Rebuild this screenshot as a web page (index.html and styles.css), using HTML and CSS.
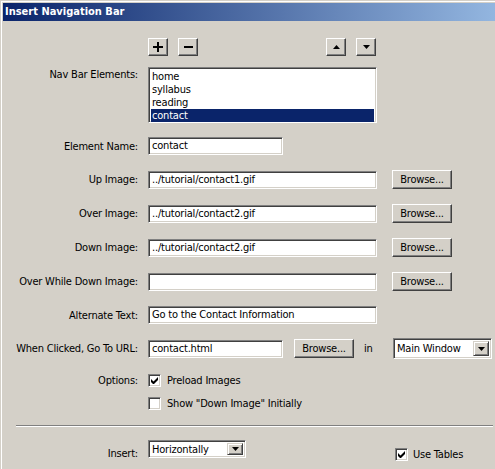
FILE: index.html
```html
<!DOCTYPE html>
<html>
<head>
<meta charset="utf-8">
<link rel="stylesheet" href="styles.css">
</head>
<body>
<div class="window">
  <div class="titlebar">Insert Navigation Bar</div>
  <div class="content">
    <div class="row toolbar">
      <span class="label"></span>
      <span class="btn sq"><svg width="10" height="10" viewBox="0 0 10 10"><path d="M4 0h2v4h4v2H6v4H4V6H0V4h4z" fill="#000"/></svg></span>
      <span class="btn sq gap10"><svg width="9" height="2" viewBox="0 0 9 2"><rect width="9" height="2" fill="#000"/></svg></span>
      <span class="btn sq gap128"><svg width="7" height="4" viewBox="0 0 7 4"><polygon points="3.5,0 7,4 0,4" fill="#000"/></svg></span>
      <span class="btn sq gap10"><svg width="7" height="4" viewBox="0 0 7 4"><polygon points="0,0 7,0 3.5,4" fill="#000"/></svg></span>
    </div>
    <div class="row listrow">
      <span class="label top">Nav Bar Elements:</span>
      <div class="list">
        <div class="item">home</div>
        <div class="item">syllabus</div>
        <div class="item">reading</div>
        <div class="item sel">contact</div>
      </div>
    </div>
    <div class="row r14">
      <span class="label">Element Name:</span>
      <span class="field short">contact</span>
    </div>
    <div class="row r15 h19">
      <span class="label">Up Image:</span>
      <span class="field long">../tutorial/contact1.gif</span>
      <span class="btn browse gap15">Browse...</span>
    </div>
    <div class="row r15 h19">
      <span class="label">Over Image:</span>
      <span class="field long">../tutorial/contact2.gif</span>
      <span class="btn browse gap15">Browse...</span>
    </div>
    <div class="row r15 h19">
      <span class="label">Down Image:</span>
      <span class="field long">../tutorial/contact2.gif</span>
      <span class="btn browse gap15">Browse...</span>
    </div>
    <div class="row r15 h19">
      <span class="label">Over While Down Image:</span>
      <span class="field long"></span>
      <span class="btn browse gap15">Browse...</span>
    </div>
    <div class="row r15">
      <span class="label">Alternate Text:</span>
      <span class="field long">Go to the Contact Information</span>
    </div>
    <div class="row r14 h21">
      <span class="label">When Clicked, Go To URL:</span>
      <span class="field short">contact.html</span>
      <span class="btn browse gap11">Browse...</span>
      <span class="in">in</span>
      <span class="select main"><span class="seltext">Main Window</span><span class="drop"><svg width="7" height="4" viewBox="0 0 7 4"><polygon points="0,0 7,0 3.5,4" fill="#000"/></svg></span></span>
    </div>
    <div class="row r15 h13">
      <span class="label">Options:</span>
      <span class="check"><svg width="7" height="7" viewBox="0 0 7 7"><path d="M0 2v3l2 2h1l4-4V0L2.5 4.5z" fill="#000"/></svg></span>
      <span class="ctext">Preload Images</span>
    </div>
    <div class="row r10 h13">
      <span class="label"></span>
      <span class="check"></span>
      <span class="ctext">Show "Down Image" Initially</span>
    </div>
    <div class="sep"></div>
    <div class="row insertrow">
      <span class="label">Insert:</span>
      <span class="select ins"><span class="seltext">Horizontally</span><span class="drop"><svg width="7" height="4" viewBox="0 0 7 4"><polygon points="0,0 7,0 3.5,4" fill="#000"/></svg></span></span>
      <span class="check usetables"><svg width="7" height="7" viewBox="0 0 7 7"><path d="M0 2v3l2 2h1l4-4V0L2.5 4.5z" fill="#000"/></svg></span>
      <span class="ctext">Use Tables</span>
    </div>
  </div>
</div>
</body>
</html>
```
FILE: styles.css
```css
* { box-sizing: border-box; }
body {
  margin: 0;
  background: #D4D0C8;
  font-family: "DejaVu Sans Condensed", Tahoma, "Liberation Sans", Arial, sans-serif;
  font-size: 11px;
  color: #000;
}
.window {
  height: 469px;
  padding: 3px 0 0 3px;
  box-shadow: inset 1px 1px 0 #D4D0C8, inset 2px 2px 0 #FFFFFF;
  overflow: hidden;
}
.titlebar {
  height: 18px;
  line-height: 18px;
  padding-left: 2px;
  color: #fff;
  font-weight: bold;
  background: linear-gradient(to right, #0A246A 0px, #A6CAF0 560px);
}
.content { letter-spacing: -0.2px; }
.row {
  display: flex;
  align-items: center;
  height: 18px;
}
.label {
  flex: none;
  width: 135px;
  margin-right: 10px;
  text-align: right;
  white-space: nowrap;
}
.label.top { align-self: flex-start; padding-top: 1px; line-height: 13px; }
.toolbar { margin-top: 17px; }
.listrow { margin-top: 11px; height: 56px; }
.r14 { margin-top: 14px; }
.r15 { margin-top: 15px; }
.r10 { margin-top: 10px; }
.h19 { height: 19px; }
.h21 { height: 21px; }
.h13 { height: 13px; }

.btn {
  flex: none;
  display: flex;
  align-items: center;
  justify-content: center;
  background: #D4D0C8;
  border: 1px solid;
  border-color: #FFFFFF #404040 #404040 #FFFFFF;
  box-shadow: inset -1px -1px 0 #808080;
}
.sq { width: 20px; height: 18px; }
.browse { width: 60px; height: 19px; padding-bottom: 1px; }
.gap10 { margin-left: 10px; }
.gap11 { margin-left: 11px; }
.gap15 { margin-left: 15px; }
.gap128 { margin-left: 128px; }

.list, .field, .check, .select {
  background: #fff;
  border: 1px solid;
  border-color: #808080 #FFFFFF #FFFFFF #808080;
  box-shadow: inset 1px 1px 0 #404040, inset -1px -1px 0 #D4D0C8;
}
.list {
  width: 229px;
  height: 56px;
  padding: 2px;
}
.item {
  height: 13px;
  line-height: 13px;
  padding-left: 1px;
}
.item.sel { background: #0A246A; color: #fff; }

.field {
  flex: none;
  height: 18px;
  line-height: 16px;
  padding-left: 3px;
  white-space: nowrap;
  overflow: hidden;
}
.short { width: 135px; }
.long { width: 229px; }

.in { margin-left: 10px; width: 29px; }

.select {
  flex: none;
  display: flex;
  align-items: stretch;
  padding: 2px;
}
.seltext { flex: 1; padding-left: 1px; line-height: 15px; white-space: nowrap; overflow: hidden; }
.select.main { width: 99px; height: 21px; }
.select.ins { width: 98px; height: 18px; align-self: flex-start; }
.select.ins .seltext { line-height: 13px; }
.drop {
  flex: none;
  width: 16px;
  display: flex;
  align-items: center;
  justify-content: center;
  background: #D4D0C8;
  border: 1px solid;
  border-color: #D4D0C8 #404040 #404040 #D4D0C8;
  box-shadow: inset 1px 1px 0 #FFFFFF, inset -1px -1px 0 #808080;
}

.check {
  flex: none;
  width: 13px;
  height: 13px;
  display: flex;
  align-items: center;
  justify-content: center;
}
.ctext { margin-left: 6px; white-space: nowrap; }

.sep {
  margin: 15px 0 0 13px;
  width: 477px;
  height: 2px;
  border-top: 1px solid #808080;
  border-bottom: 1px solid #FFFFFF;
}
.insertrow { margin-top: 13px; height: 21px; align-items: center; }
.insertrow .label { padding-top: 5px; }
.usetables { margin-left: 149px; margin-top: 7px; }
.insertrow .ctext { margin-left: 5px; padding-top: 7px; }
```
